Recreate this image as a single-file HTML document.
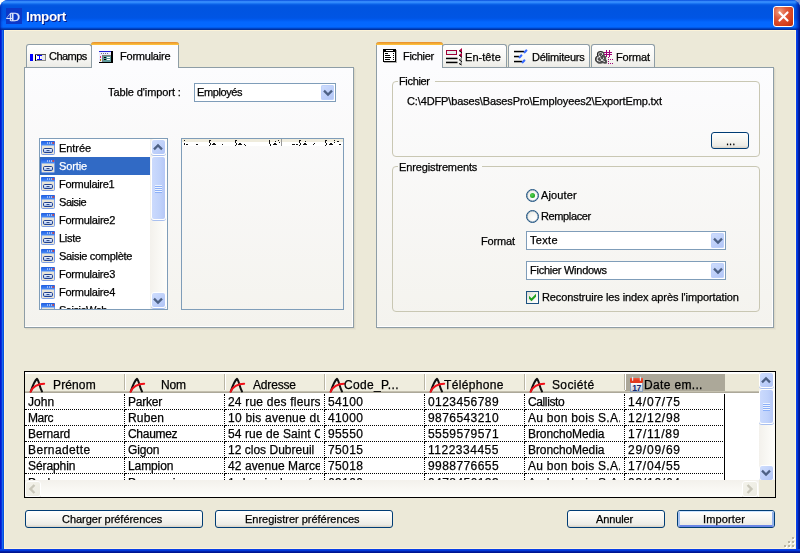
<!DOCTYPE html>
<html lang="fr">
<head>
<meta charset="utf-8">
<title>Import</title>
<style>
html,body{margin:0;padding:0;}
body{width:800px;height:553px;overflow:hidden;background:#fff;position:relative;
  font-family:"Liberation Sans","DejaVu Sans",sans-serif;font-size:11px;color:#000;}
*{box-sizing:border-box;}
.abs{position:absolute;}
.t{position:absolute;white-space:pre;line-height:16px;height:16px;will-change:transform;-webkit-text-stroke:0.25px currentColor;}
#win{position:absolute;left:0;top:0;width:800px;height:553px;background:#0855dd;border-radius:8px 8px 0 0;overflow:hidden;}
#title{position:absolute;left:0;top:0;width:800px;height:30px;
 background:linear-gradient(to bottom,#0042d8 0px,#2a7df5 1px,#3c92ff 2px,#2580f8 3px,#0f68ec 4px,#0458e2 5px,#0054e0 7px,#0055e4 18px,#005cf2 20px,#0467fd 22px,#0468ff 27px,#0050d8 28px,#0038b0 29px,#002a90 30px);}
#title:before{content:"";position:absolute;left:0;top:0;width:4px;height:30px;background:linear-gradient(to right,rgba(0,20,150,.75) 0,rgba(0,30,170,.35) 1px,rgba(0,60,220,0) 3px);}
#title:after{content:"";position:absolute;right:0;top:0;width:5px;height:30px;background:linear-gradient(to left,rgba(0,10,120,.85) 0,rgba(0,20,160,.6) 2px,rgba(0,60,220,0) 5px);}
.cap{text-shadow:1px 1px 0 #0a1883;-webkit-text-stroke:0 !important;}
#client{position:absolute;left:4px;top:30px;width:792px;height:519px;background:#ece9d8;border:1px solid #fcf3d8;}
#bl{position:absolute;left:0;top:30px;width:4px;height:519px;background:linear-gradient(to right,#0019d0 0,#0019d0 1px,#0a30d8 1px,#0a30d8 2px,#1668f0 2px,#1668f0 3px,#0650dd 3px,#0650dd 4px);}
#br{position:absolute;left:796px;top:30px;width:4px;height:523px;background:linear-gradient(to right,#0a40e8 0,#0a40e8 1px,#0238d8 1px,#0238d8 2px,#0020a8 2px,#0020a8 3px,#001590 3px,#001590 4px);}
#bb{position:absolute;left:0;top:549px;width:800px;height:4px;background:linear-gradient(to bottom,#0a40e8 0,#0a40e8 1px,#0238d8 1px,#0238d8 2px,#0020a8 2px,#0020a8 3px,#001590 3px,#001590 4px);}
.close{position:absolute;left:773px;top:6px;width:21px;height:21px;border:1px solid #fff;border-radius:3px;
 background:radial-gradient(circle at 30% 25%,#f0a080 0%,#e0583a 35%,#d6401c 70%,#b92a0c 100%);}
.pane{position:absolute;border:1px solid #8e9da6;background:linear-gradient(to bottom,#fcfcfe 0%,#f4f3ee 100%);box-shadow:inset -1px -1px 0 #fff,1px 1px 0 #dcd9c8,2px 2px 0 #e6e3d2;}
.tab{position:absolute;border:1px solid #8e9da6;border-bottom:none;border-radius:3px 3px 0 0;background:linear-gradient(to bottom,#ffffff 0%,#f7f7f4 60%,#ecebe6 100%);}
.tab.sel{background:#fcfcfe;border-top:none;}
.tab.sel:before{content:"";position:absolute;left:-1px;right:-1px;top:0;height:3px;border-radius:3px 3px 0 0;background:linear-gradient(to bottom,#e68b2c 0,#ffc73c 100%);}
.grp{position:absolute;border:1px solid #c9c7b3;border-radius:4px;}
.grp i{position:absolute;top:-1px;height:1px;background:#fafaf9;}
.combo{position:absolute;border:1px solid #7f9db9;background:#fff;height:19px;}
.combo .dd{position:absolute;right:1px;top:1px;width:13px;height:15px;border-radius:2px;
 background:linear-gradient(135deg,#d0defd 0%,#c1d2fa 45%,#b0c4f6 100%);box-shadow:inset 0 0 0 1px rgba(190,208,250,.9);}
.btn{position:absolute;border:1px solid #003c74;border-radius:3px;height:18px;
 background:linear-gradient(to bottom,#ffffff 0%,#f6f5f0 50%,#ecebe5 85%,#d6d0c5 100%);}
.btn.def:before{content:"";position:absolute;left:0;top:0;right:0;bottom:0;border-radius:2px;border-style:solid;border-width:1px 2px 2px 2px;border-color:#cbe3ff #94b4ec #6a86e6 #a6c2f0;}
.sbv{position:absolute;width:17px;background:linear-gradient(to right,#f3f1ec 0,#fefefb 100%);}
.sbb{position:absolute;width:15px;height:16px;left:1px;border:1px solid #fff;border-radius:3px;background:linear-gradient(135deg,#d0defd 0%,#c1d2fa 45%,#b0c4f6 100%);box-shadow:0 1px 0 #a9c0ef;}
.thumb{position:absolute;left:1px;width:15px;border:1px solid #fff;border-radius:3px;background:linear-gradient(to right,#cbdafd 0,#c1d3fb 55%,#b6c8f7 100%);box-shadow:0 1px 0 #a9c0ef;}
.lbox{position:absolute;border:1px solid #7f9db9;background:#fff;overflow:hidden;}
.lin{position:absolute;overflow:hidden;}
.li{position:absolute;left:0;width:110px;height:18px;}
.li.sel{background:#316ac5;}
.li .fi{left:1px;top:2px;}
.grip{position:absolute;left:3px;width:7px;height:8px;background:repeating-linear-gradient(to bottom,#eef4fe 0,#eef4fe 1px,#8cb0f8 1px,#8cb0f8 2px);}
.hc{position:absolute;top:2px;width:100px;height:17px;background:#efedde;}
.hc:after{content:"";position:absolute;right:-1px;top:0px;width:2px;height:16px;z-index:2;background:linear-gradient(to right,#b9b5a4 0,#b9b5a4 1px,#fff 1px,#fff 2px);}
.hc.hsel{background:#aca899;}
.hc.hsel:after{display:none;}
.cell{position:absolute;width:100px;height:16px;border-right:1px dotted #000;border-bottom:1px dotted #000;}
.cell.last{border-right:1px solid #000;}
.sbd{position:absolute;width:16px;height:16px;border:1px solid #fff;border-radius:3px;background:linear-gradient(135deg,#f3f2ea 0,#ecebe2 100%);box-shadow:0 1px 0 #e4e2d6;}
.radio{position:absolute;width:13px;height:13px;border-radius:50%;border:1px solid #1c5180;box-shadow:inset 0 0 0 0.6px rgba(28,81,128,.55);background:radial-gradient(circle at 65% 65%,#ffffff 0%,#f4f4f0 50%,#dcdcd4 100%);}
.radio i{position:absolute;left:3px;top:3px;width:5px;height:5px;border-radius:50%;background:radial-gradient(circle at 40% 40%,#55d551 0%,#21a121 70%,#1a7e18 100%);}
.chk{position:absolute;width:13px;height:13px;border:1px solid #1c5180;background:linear-gradient(135deg,#dcdcd4 0%,#f4f4f0 50%,#ffffff 100%);}
.gd{position:absolute;width:2px;height:2px;background:#b8b4a2;box-shadow:1px 1px 0 #fff;}
svg{position:absolute;overflow:visible;}
</style>
</head>
<body>
<div class="abs" style="left:790px;top:0;width:10px;height:10px;background:#7b96d8"></div>
<div id="win">

 <svg width="0" height="0" style="left:0;top:0"><defs>
  <linearGradient id="gtb" x1="0" y1="0" x2="0" y2="1"><stop offset="0" stop-color="#1f5ee0"/><stop offset="1" stop-color="#4d8ef8"/></linearGradient>
  <linearGradient id="gbt" x1="0" y1="0" x2="0" y2="1"><stop offset="0" stop-color="#ffffff"/><stop offset="1" stop-color="#8fb0ee"/></linearGradient>
  <g id="ficon">
   <rect x="0.5" y="0.5" width="13" height="13" rx="1" fill="#e9e5d6" stroke="#7b9de4"/>
   <rect x="0" y="0" width="14" height="4.5" rx="1" fill="url(#gtb)"/>
   <rect x="6" y="1.5" width="1" height="1" fill="#fff"/><rect x="8" y="1.5" width="1" height="1" fill="#fff"/><rect x="10" y="1.5" width="1" height="1" fill="#fff"/>
   <rect x="11.5" y="1.2" width="1.6" height="1.6" fill="#f0412a"/>
   <rect x="2.5" y="7.5" width="9" height="4" rx="1.2" fill="url(#gbt)" stroke="#1f3f8f"/>
   <rect x="5.5" y="9" width="3" height="1" fill="#3a4f7f"/>
  </g>
  <g id="aicon" fill="none" stroke-linecap="round">
   <path d="M1.8 13.4 C3.6 8 5.6 2.6 8 0.9 C9.9 2.2 10.4 9 13 13.4" stroke="#111" stroke-width="2"/>
   <path d="M1.5 13.8 C3.2 10 7 5.8 15.2 5.7" stroke="#f01018" stroke-width="1.9"/>
  </g>
  <g id="calicon">
   <linearGradient id="gcal" x1="0" y1="0" x2="0" y2="1"><stop offset="0" stop-color="#ffffff"/><stop offset="1" stop-color="#c3ccd9"/></linearGradient>
   <rect x="0.5" y="4.5" width="12" height="9" fill="url(#gcal)" stroke="#8aa0bd" stroke-width="1"/>
   <rect x="0" y="0" width="13" height="5" rx="1" fill="#e23a1e"/>
   <rect x="0" y="0" width="13" height="1.5" rx="0.8" fill="#f0583c"/>
   <rect x="2" y="-1.2" width="1.2" height="4" fill="#dce6f2"/><rect x="9.8" y="-1.2" width="1.2" height="4" fill="#dce6f2"/>
   <text x="6.6" y="12.6" text-anchor="middle" font-family="Liberation Sans,sans-serif" font-size="8.6" font-weight="bold" fill="#14286e" letter-spacing="-0.5">17</text>
  </g>
  <g id="arrdn"><path d="M0 3.2 L4.8 -1.6 L3.2 -3.3 L0 -0.1 L-3.2 -3.3 L-4.8 -1.6 Z" fill="#4d6185"/></g>
  <g id="arrup"><path d="M0 -3.2 L4.8 1.6 L3.2 3.3 L0 0.1 L-3.2 3.3 L-4.8 1.6 Z" fill="#4d6185"/></g>
 </defs></svg>

 <div id="title">
  <svg style="left:6px;top:8px;will-change:transform" width="16" height="16" viewBox="0 0 16 16"><rect width="16" height="16" fill="#0c38c8"/><text x="0" y="12.6" font-family="Liberation Serif,serif" font-size="12.5" fill="#dde5fb">4</text><text x="4.6" y="12.6" font-family="Liberation Serif,serif" font-size="13" fill="#dde5fb" stroke="#dde5fb" stroke-width="0.3">D</text></svg>
  <div class="close"><svg style="left:0;top:0" width="19" height="19" viewBox="0 0 19 19"><path d="M5.5 5.5 L13.5 13.5 M13.5 5.5 L5.5 13.5" stroke="#fff" stroke-width="2.2" stroke-linecap="round"/></svg></div>
 </div>
<div class="t cap" style="left:25.90px;top:9.32px;letter-spacing:-0.367px;font-size:13.5px;color:#fff;font-weight:bold;">Import</div>
 <div id="bl"></div><div id="br"></div><div id="bb"></div>
 <div id="client"></div>

 <div class="pane" style="left:24px;top:67px;width:330px;height:261px;"></div>
 <div class="tab" style="left:26px;top:44px;width:66px;height:23px;"></div>
 <div class="tab sel" style="left:91px;top:42px;width:88px;height:26px;"></div>
 <div class="combo" style="left:194px;top:83px;width:142px;"><div class="dd"><svg width="14" height="14" viewBox="0 0 14 14" style="left:6.5px;top:7.8px"><use href="#arrdn"/></svg></div></div>

 <div class="pane" style="left:376px;top:67px;width:398px;height:261px;"></div>
 <div class="tab" style="left:442px;top:44px;width:65px;height:23px;"></div>
 <div class="tab" style="left:508px;top:44px;width:82px;height:23px;"></div>
 <div class="tab" style="left:591px;top:44px;width:64px;height:23px;"></div>
 <div class="tab sel" style="left:376px;top:42px;width:67px;height:26px;"></div>
 <div class="grp" style="left:392px;top:81px;width:368px;height:76px;"><i style="left:5px;width:37px"></i></div>
 <div class="btn" style="left:711px;top:132px;width:38px;height:17px;"></div>
 <div class="grp" style="left:392px;top:166px;width:368px;height:146px;"><i style="left:5px;width:84px"></i></div>
 <div class="combo" style="left:526px;top:231px;width:200px;"><div class="dd"><svg width="14" height="14" viewBox="0 0 14 14" style="left:6.5px;top:7.8px"><use href="#arrdn"/></svg></div></div>
 <div class="combo" style="left:526px;top:261px;width:200px;"><div class="dd"><svg width="14" height="14" viewBox="0 0 14 14" style="left:6.5px;top:7.8px"><use href="#arrdn"/></svg></div></div>
 <div class="radio" style="left:526px;top:189px;"><i></i></div>
 <div class="radio" style="left:526px;top:210px;"></div>
 <div class="chk" style="left:526px;top:291px;"><svg width="13" height="13" viewBox="0 0 13 13" style="left:-1px;top:-1px"><path d="M3 4.7 L5.5 7.2 L10 2.7 L10 5.7 L5.5 10.2 L3 7.7 Z" fill="#21a121"/></svg></div>
 <div class="btn" style="left:25px;top:510px;width:178px;"></div>
 <div class="btn" style="left:215px;top:510px;width:178px;"></div>
 <div class="btn" style="left:567px;top:510px;width:98px;"></div>
 <div class="btn def" style="left:677px;top:510px;width:98px;"></div>


 <svg width="17" height="8" viewBox="0 0 17 8" style="left:30px;top:54px" shape-rendering="crispEdges">
  <rect x="0" y="0" width="3" height="7" fill="#0000ff"/>
  <rect x="5" y="0" width="11" height="7" fill="#e9e9e9"/><rect x="6" y="1" width="5" height="5" fill="#fff"/>
  <rect x="5" y="0" width="1" height="7" fill="#000"/><rect x="5" y="0" width="11" height="1" fill="#555"/>
  <rect x="15" y="1" width="1" height="6" fill="#888"/><rect x="6" y="6" width="10" height="1" fill="#888"/>
  <rect x="7" y="1" width="2" height="1" fill="#0000ff"/><rect x="10" y="1" width="2" height="1" fill="#0000ff"/>
  <rect x="7" y="5" width="2" height="1" fill="#0000ff"/><rect x="10" y="5" width="2" height="1" fill="#0000ff"/>
  <rect x="9" y="1" width="1" height="5" fill="#0000ff"/>
 </svg>
 <svg width="14" height="12" viewBox="0 0 14 12" style="left:99px;top:51px" shape-rendering="crispEdges">
  <rect x="0" y="0" width="13" height="11" fill="#ececff"/>
  <rect x="0" y="0" width="12" height="1" fill="#2020d8"/>
  <rect x="2" y="2" width="1" height="1" fill="#777"/><rect x="4" y="2" width="1" height="1" fill="#777"/><rect x="6" y="2" width="1" height="1" fill="#777"/><rect x="8" y="2" width="1" height="1" fill="#777"/>
  <rect x="3" y="4" width="9" height="7" fill="#7e7e7e"/>
  <rect x="4" y="5" width="8" height="6" fill="#5f9c9c"/>
  <rect x="5" y="6" width="2" height="1" fill="#000"/><rect x="8" y="6" width="3" height="1" fill="#fff"/>
  <rect x="5" y="8" width="2" height="1" fill="#000"/><rect x="8" y="8" width="3" height="1" fill="#fff"/>
  <rect x="1" y="5" width="1" height="2" fill="#e0306c"/><rect x="1" y="8" width="1" height="2" fill="#c08000"/>
  <rect x="12" y="0" width="2" height="12" fill="#000"/><rect x="0" y="11" width="14" height="1" fill="#000"/>
 </svg>
 <svg width="14" height="14" viewBox="0 0 14 14" style="left:383px;top:49px" shape-rendering="crispEdges">
  <rect x="1" y="1" width="13" height="13" fill="#b0b0b0"/>
  <rect x="0" y="0" width="13" height="13" fill="#000"/>
  <rect x="1" y="3" width="11" height="9" fill="#fff"/>
  <rect x="3" y="1" width="7" height="1" fill="#fff"/>
  <rect x="2" y="4" width="3" height="1" fill="#000"/><rect x="2" y="6" width="5" height="1" fill="#000"/><rect x="2" y="8" width="6" height="1" fill="#000"/><rect x="2" y="10" width="5" height="1" fill="#000"/>
  <rect x="10" y="4" width="1" height="1" fill="#000"/><rect x="10" y="6" width="1" height="1" fill="#000"/><rect x="10" y="8" width="1" height="1" fill="#000"/><rect x="10" y="10" width="1" height="1" fill="#000"/>
 </svg>
 <svg width="17" height="17" viewBox="0 0 17 17" style="left:446px;top:48px">
  <rect x="0.5" y="2.5" width="10" height="4" fill="#e2f0ec" stroke="#a00038" stroke-width="1"/>
  <rect x="0" y="9.7" width="11.5" height="1.5" fill="#000"/><rect x="0" y="13.7" width="11.5" height="1.5" fill="#000"/>
  <path d="M16 0 L13 2.5 L16 5 Z M16 4.5 L13 7 L16 9.5 Z" fill="#b00040"/>
  <path d="M16 9 L13 11.5 L16 14 Z M16 13 L13 15.5 L16 17 Z" fill="#999"/>
  <path d="M13 2.5 L16 5 M13 7 L16 9.5 M13 11.5 L16 14 M13 15.5 L15.5 17" stroke="#000" stroke-width="1" fill="none"/>
 </svg>
 <svg width="14" height="14" viewBox="0 0 14 14" style="left:514px;top:50px">
  <rect x="0" y="0.8" width="10" height="1.5" fill="#000"/><rect x="0" y="5.8" width="5" height="1.5" fill="#000"/><rect x="0" y="10.8" width="8" height="1.5" fill="#000"/>
  <path d="M10.6 2.2 L12.3 0.5" stroke="#3a6cff" stroke-width="2.3" stroke-linecap="round"/>
  <path d="M5.6 7.2 L7.3 5.5" stroke="#3a6cff" stroke-width="2.3" stroke-linecap="round"/>
  <path d="M8.6 12.2 L10.3 10.5" stroke="#3a6cff" stroke-width="2.3" stroke-linecap="round"/>
 </svg>
 <svg width="19" height="15" viewBox="0 0 19 15" style="left:595px;top:49px;will-change:transform">
  <text x="0.6" y="13" font-family="Liberation Sans,sans-serif" font-size="14.5" font-weight="bold" fill="#222" stroke="#222" stroke-width="2.2" stroke-linejoin="round">&amp;</text>
  <text x="1.3" y="13.6" font-family="Liberation Sans,sans-serif" font-size="14.5" font-weight="bold" fill="#555" stroke="#555" stroke-width="1.6" stroke-linejoin="round">&amp;</text>
  <text x="0.6" y="13" font-family="Liberation Sans,sans-serif" font-size="14.5" font-weight="bold" fill="#fff" stroke="#333" stroke-width="0.7">&amp;</text>
  <g fill="#a00078" shape-rendering="crispEdges">
   <rect x="9" y="3" width="8" height="1"/><rect x="9" y="5" width="8" height="1"/><rect x="11" y="1" width="1.4" height="7"/><rect x="14" y="1" width="1.4" height="7"/>
   <rect x="13" y="8" width="1" height="1"/><rect x="13" y="10" width="1" height="1"/><rect x="13" y="12" width="1" height="1"/><rect x="13" y="14" width="1" height="1"/>
   <rect x="15" y="10" width="1" height="1"/><rect x="17" y="10" width="1" height="1"/><rect x="15" y="14" width="1" height="1"/><rect x="17" y="14" width="1" height="1"/>
  </g>
 </svg>

 <div class="lbox" style="left:39px;top:138px;width:129px;height:172px;">
  <div class="lin" style="left:0;top:0;width:110px;height:170px;">
   <div class="li" style="top:0px"><svg class="fi" width="14" height="14" viewBox="0 0 14 14"><use href="#ficon"/></svg></div>
   <div class="t " style="left:19.40px;top:1.19px;letter-spacing:-0.070px;">Entrée</div>
   <div class="li sel" style="top:18px"><svg class="fi" width="14" height="14" viewBox="0 0 14 14"><use href="#ficon"/></svg></div>
   <div class="t " style="left:19.40px;top:19.19px;letter-spacing:-0.108px;color:#fff;">Sortie</div>
   <div class="li" style="top:36px"><svg class="fi" width="14" height="14" viewBox="0 0 14 14"><use href="#ficon"/></svg></div>
   <div class="t " style="left:19.40px;top:37.19px;letter-spacing:-0.308px;">Formulaire1</div>
   <div class="li" style="top:54px"><svg class="fi" width="14" height="14" viewBox="0 0 14 14"><use href="#ficon"/></svg></div>
   <div class="t " style="left:19.40px;top:55.19px;letter-spacing:-0.461px;">Saisie</div>
   <div class="li" style="top:72px"><svg class="fi" width="14" height="14" viewBox="0 0 14 14"><use href="#ficon"/></svg></div>
   <div class="t " style="left:19.40px;top:73.19px;letter-spacing:-0.235px;">Formulaire2</div>
   <div class="li" style="top:90px"><svg class="fi" width="14" height="14" viewBox="0 0 14 14"><use href="#ficon"/></svg></div>
   <div class="t " style="left:19.40px;top:91.19px;letter-spacing:-0.250px;">Liste</div>
   <div class="li" style="top:108px"><svg class="fi" width="14" height="14" viewBox="0 0 14 14"><use href="#ficon"/></svg></div>
   <div class="t " style="left:19.40px;top:109.19px;letter-spacing:-0.310px;">Saisie complète</div>
   <div class="li" style="top:126px"><svg class="fi" width="14" height="14" viewBox="0 0 14 14"><use href="#ficon"/></svg></div>
   <div class="t " style="left:19.40px;top:127.19px;letter-spacing:-0.244px;">Formulaire3</div>
   <div class="li" style="top:144px"><svg class="fi" width="14" height="14" viewBox="0 0 14 14"><use href="#ficon"/></svg></div>
   <div class="t " style="left:19.40px;top:145.19px;letter-spacing:-0.244px;">Formulaire4</div>
   <div class="li" style="top:162px"><svg class="fi" width="14" height="14" viewBox="0 0 14 14"><use href="#ficon"/></svg></div>
   <div class="t " style="left:19.40px;top:163.19px;letter-spacing:-0.488px;">SaisieWeb</div>
  </div>
  <div class="sbv" style="left:110px;top:0;height:170px;">
   <div class="sbb" style="top:0px;"><svg width="14" height="14" viewBox="0 0 14 14" style="left:6.2px;top:6.9px"><use href="#arrup"/></svg></div>
   <div class="thumb" style="top:17px;height:64px;"><i class="grip" style="top:28px"></i></div>
   <div class="sbb" style="top:153px;"><svg width="14" height="14" viewBox="0 0 14 14" style="left:6.2px;top:7.7px"><use href="#arrdn"/></svg></div>
  </div>
 </div>
 <div class="abs" style="left:181px;top:138px;width:163px;height:172px;border:1px solid #7f9db9;">
  <div class="abs" style="left:0;top:0;width:161px;height:3px;background:#efecdd;"></div>
  <div class="abs" style="left:0;top:3px;width:161px;height:4px;background:#fff;"></div>
  <svg width="161" height="7" viewBox="0 0 161 7" style="left:0;top:0" fill="#111" shape-rendering="crispEdges"><rect x="2" y="1" width="1" height="1"/><rect x="2" y="4" width="1" height="2"/><rect x="4" y="5" width="2" height="1"/><rect x="14" y="5" width="2" height="1"/><rect x="27" y="1" width="2" height="1"/><rect x="27" y="2" width="1" height="2"/><rect x="28" y="4" width="1" height="2"/><rect x="27" y="6" width="1" height="1"/><rect x="30" y="5" width="4" height="1"/><rect x="31" y="4" width="2" height="1"/><rect x="40" y="5" width="1" height="1"/><rect x="53" y="1" width="2" height="1"/><rect x="53" y="2" width="1" height="2"/><rect x="54" y="4" width="1" height="2"/><rect x="53" y="6" width="1" height="1"/><rect x="56" y="5" width="4" height="1"/><rect x="57" y="4" width="2" height="1"/><rect x="62" y="5" width="1" height="1"/><rect x="63" y="6" width="1" height="1"/><rect x="87" y="1" width="1" height="2"/><rect x="87" y="3" width="1" height="2"/><rect x="88" y="5" width="1" height="2"/><rect x="91" y="5" width="4" height="1"/><rect x="92" y="4" width="2" height="1"/><rect x="93" y="2" width="1" height="1"/><rect x="96" y="1" width="1" height="1"/><rect x="97" y="3" width="1" height="1"/><rect x="110" y="5" width="3" height="1"/><rect x="114" y="5" width="2" height="1"/><rect x="117" y="1" width="2" height="1"/><rect x="117" y="2" width="1" height="2"/><rect x="118" y="4" width="1" height="2"/><rect x="117" y="6" width="1" height="1"/><rect x="121" y="5" width="4" height="1"/><rect x="122" y="4" width="2" height="1"/><rect x="123" y="2" width="1" height="1"/><rect x="131" y="5" width="1" height="1"/><rect x="132" y="4" width="1" height="1"/><rect x="143" y="1" width="2" height="1"/><rect x="143" y="2" width="1" height="2"/><rect x="144" y="4" width="1" height="2"/><rect x="143" y="6" width="1" height="1"/><rect x="147" y="5" width="4" height="1"/><rect x="148" y="4" width="2" height="1"/><rect x="152" y="1" width="1" height="1"/><rect x="152" y="3" width="1" height="1"/><rect x="155" y="2" width="2" height="1"/><rect x="157" y="5" width="2" height="1"/><rect x="99" y="0" width="1" height="7" fill="#999"/></svg>
 </div>
 <div class="abs" style="left:24px;top:371px;width:752px;height:127px;border:1px solid #000;background:#fff;overflow:hidden;">
  <div class="abs" style="left:0;top:0;width:734px;height:21px;background:linear-gradient(to bottom,#fff 0,#fff 2px,#ece9d8 2px,#ece9d8 19px,#c4c0af 19px,#c4c0af 20px,#aca899 20px,#aca899 21px);"></div>
  <div class="hc" style="left:0px"><svg width="16" height="15" viewBox="0 0 16 15" style="left:4px;top:4px"><use href="#aicon"/></svg></div>
  <div class="t " style="left:28.00px;top:4.84px;letter-spacing:0.128px;font-size:12px;">Prénom</div>
  <div class="hc" style="left:100px"><svg width="16" height="15" viewBox="0 0 16 15" style="left:4px;top:4px"><use href="#aicon"/></svg></div>
  <div class="t " style="left:136.10px;top:4.84px;letter-spacing:-0.148px;font-size:12px;">Nom</div>
  <div class="hc" style="left:200px"><svg width="16" height="15" viewBox="0 0 16 15" style="left:4px;top:4px"><use href="#aicon"/></svg></div>
  <div class="t " style="left:227.60px;top:4.84px;letter-spacing:-0.176px;font-size:12px;">Adresse</div>
  <div class="hc" style="left:300px"><svg width="16" height="15" viewBox="0 0 16 15" style="left:4px;top:4px"><use href="#aicon"/></svg></div>
  <div class="t " style="left:318.60px;top:4.84px;letter-spacing:0.330px;font-size:12px;">Code_P...</div>
  <div class="hc" style="left:400px"><svg width="16" height="15" viewBox="0 0 16 15" style="left:4px;top:4px"><use href="#aicon"/></svg></div>
  <div class="t " style="left:418.60px;top:4.84px;letter-spacing:0.342px;font-size:12px;">Téléphone</div>
  <div class="hc" style="left:500px"><svg width="16" height="15" viewBox="0 0 16 15" style="left:4px;top:4px"><use href="#aicon"/></svg></div>
  <div class="t " style="left:526.90px;top:4.84px;letter-spacing:0.353px;font-size:12px;">Société</div>
  <div class="hc hsel" style="left:600px"><svg width="14" height="14" viewBox="0 0 14 14" style="left:5px;top:4px"><use href="#calicon"/></svg></div>
  <div class="t " style="left:619.20px;top:4.84px;letter-spacing:0.344px;font-size:12px;">Date em...</div>
  <div class="abs" style="left:0;top:22px;width:701px;height:86px;overflow:hidden;">
   <div class="cell" style="left:0px;top:0px"></div>
   <div class="t " style="left:3.10px;top:-0.16px;letter-spacing:0.092px;font-size:12px;width:92.4px;overflow:hidden;">John</div>
   <div class="cell" style="left:100px;top:0px"></div>
   <div class="t " style="left:103.10px;top:-0.16px;letter-spacing:-0.224px;font-size:12px;width:92.4px;overflow:hidden;">Parker</div>
   <div class="cell" style="left:200px;top:0px"></div>
   <div class="t " style="left:203.10px;top:-0.16px;letter-spacing:0.201px;font-size:12px;width:92.4px;overflow:hidden;">24 rue des fleurs</div>
   <div class="cell" style="left:300px;top:0px"></div>
   <div class="t " style="left:303.10px;top:-0.16px;letter-spacing:0.385px;font-size:12px;width:92.4px;overflow:hidden;">54100</div>
   <div class="cell" style="left:400px;top:0px"></div>
   <div class="t " style="left:403.10px;top:-0.16px;letter-spacing:0.425px;font-size:12px;width:92.4px;overflow:hidden;">0123456789</div>
   <div class="cell" style="left:500px;top:0px"></div>
   <div class="t " style="left:503.10px;top:-0.16px;letter-spacing:-0.382px;font-size:12px;width:92.4px;overflow:hidden;">Callisto</div>
   <div class="cell last" style="left:600px;top:0px"></div>
   <div class="t " style="left:603.10px;top:-0.16px;letter-spacing:0.760px;font-size:12px;width:92.4px;overflow:hidden;">14/07/75</div>
   <div class="cell" style="left:0px;top:16px"></div>
   <div class="t " style="left:3.10px;top:15.84px;letter-spacing:-0.393px;font-size:12px;width:92.4px;overflow:hidden;">Marc</div>
   <div class="cell" style="left:100px;top:16px"></div>
   <div class="t " style="left:103.10px;top:15.84px;letter-spacing:0.145px;font-size:12px;width:92.4px;overflow:hidden;">Ruben</div>
   <div class="cell" style="left:200px;top:16px"></div>
   <div class="t " style="left:203.10px;top:15.84px;letter-spacing:0.243px;font-size:12px;width:92.4px;overflow:hidden;">10 bis avenue du Maine</div>
   <div class="cell" style="left:300px;top:16px"></div>
   <div class="t " style="left:303.10px;top:15.84px;letter-spacing:0.385px;font-size:12px;width:92.4px;overflow:hidden;">41000</div>
   <div class="cell" style="left:400px;top:16px"></div>
   <div class="t " style="left:403.10px;top:15.84px;letter-spacing:0.425px;font-size:12px;width:92.4px;overflow:hidden;">9876543210</div>
   <div class="cell" style="left:500px;top:16px"></div>
   <div class="t " style="left:503.10px;top:15.84px;letter-spacing:0.276px;font-size:12px;width:92.4px;overflow:hidden;">Au bon bois S.A.</div>
   <div class="cell last" style="left:600px;top:16px"></div>
   <div class="t " style="left:603.10px;top:15.84px;letter-spacing:0.760px;font-size:12px;width:92.4px;overflow:hidden;">12/12/98</div>
   <div class="cell" style="left:0px;top:32px"></div>
   <div class="t " style="left:3.10px;top:31.84px;letter-spacing:-0.072px;font-size:12px;width:92.4px;overflow:hidden;">Bernard</div>
   <div class="cell" style="left:100px;top:32px"></div>
   <div class="t " style="left:103.10px;top:31.84px;letter-spacing:-0.294px;font-size:12px;width:92.4px;overflow:hidden;">Chaumez</div>
   <div class="cell" style="left:200px;top:32px"></div>
   <div class="t " style="left:203.10px;top:31.84px;letter-spacing:0.093px;font-size:12px;width:92.4px;overflow:hidden;">54 rue de Saint Cloud</div>
   <div class="cell" style="left:300px;top:32px"></div>
   <div class="t " style="left:303.10px;top:31.84px;letter-spacing:0.385px;font-size:12px;width:92.4px;overflow:hidden;">95550</div>
   <div class="cell" style="left:400px;top:32px"></div>
   <div class="t " style="left:403.10px;top:31.84px;letter-spacing:0.425px;font-size:12px;width:92.4px;overflow:hidden;">5559579571</div>
   <div class="cell" style="left:500px;top:32px"></div>
   <div class="t " style="left:503.10px;top:31.84px;letter-spacing:-0.091px;font-size:12px;width:92.4px;overflow:hidden;">BronchoMedia</div>
   <div class="cell last" style="left:600px;top:32px"></div>
   <div class="t " style="left:603.10px;top:31.84px;letter-spacing:0.800px;font-size:12px;width:92.4px;overflow:hidden;">17/11/89</div>
   <div class="cell" style="left:0px;top:48px"></div>
   <div class="t " style="left:3.10px;top:47.84px;letter-spacing:0.388px;font-size:12px;width:92.4px;overflow:hidden;">Bernadette</div>
   <div class="cell" style="left:100px;top:48px"></div>
   <div class="t " style="left:103.10px;top:47.84px;letter-spacing:-0.146px;font-size:12px;width:92.4px;overflow:hidden;">Gigon</div>
   <div class="cell" style="left:200px;top:48px"></div>
   <div class="t " style="left:203.10px;top:47.84px;letter-spacing:0.016px;font-size:12px;width:92.4px;overflow:hidden;">12 clos Dubreuil</div>
   <div class="cell" style="left:300px;top:48px"></div>
   <div class="t " style="left:303.10px;top:47.84px;letter-spacing:0.385px;font-size:12px;width:92.4px;overflow:hidden;">75015</div>
   <div class="cell" style="left:400px;top:48px"></div>
   <div class="t " style="left:403.10px;top:47.84px;letter-spacing:0.514px;font-size:12px;width:92.4px;overflow:hidden;">1122334455</div>
   <div class="cell" style="left:500px;top:48px"></div>
   <div class="t " style="left:503.10px;top:47.84px;letter-spacing:-0.091px;font-size:12px;width:92.4px;overflow:hidden;">BronchoMedia</div>
   <div class="cell last" style="left:600px;top:48px"></div>
   <div class="t " style="left:603.10px;top:47.84px;letter-spacing:0.760px;font-size:12px;width:92.4px;overflow:hidden;">29/09/69</div>
   <div class="cell" style="left:0px;top:64px"></div>
   <div class="t " style="left:3.10px;top:63.84px;letter-spacing:-0.081px;font-size:12px;width:92.4px;overflow:hidden;">Séraphin</div>
   <div class="cell" style="left:100px;top:64px"></div>
   <div class="t " style="left:103.10px;top:63.84px;letter-spacing:-0.104px;font-size:12px;width:92.4px;overflow:hidden;">Lampion</div>
   <div class="cell" style="left:200px;top:64px"></div>
   <div class="t " style="left:203.10px;top:63.84px;letter-spacing:0.071px;font-size:12px;width:92.4px;overflow:hidden;">42 avenue Marceau</div>
   <div class="cell" style="left:300px;top:64px"></div>
   <div class="t " style="left:303.10px;top:63.84px;letter-spacing:0.385px;font-size:12px;width:92.4px;overflow:hidden;">75018</div>
   <div class="cell" style="left:400px;top:64px"></div>
   <div class="t " style="left:403.10px;top:63.84px;letter-spacing:0.425px;font-size:12px;width:92.4px;overflow:hidden;">9988776655</div>
   <div class="cell" style="left:500px;top:64px"></div>
   <div class="t " style="left:503.10px;top:63.84px;letter-spacing:0.276px;font-size:12px;width:92.4px;overflow:hidden;">Au bon bois S.A.</div>
   <div class="cell last" style="left:600px;top:64px"></div>
   <div class="t " style="left:603.10px;top:63.84px;letter-spacing:0.760px;font-size:12px;width:92.4px;overflow:hidden;">17/04/55</div>
   <div class="cell" style="left:0px;top:80px"></div>
   <div class="t " style="left:3.10px;top:80.84px;letter-spacing:-0.600px;font-size:12px;width:92.4px;overflow:hidden;">Paul</div>
   <div class="cell" style="left:100px;top:80px"></div>
   <div class="t " style="left:103.10px;top:80.84px;letter-spacing:-0.011px;font-size:12px;width:92.4px;overflow:hidden;">Pomponi</div>
   <div class="cell" style="left:200px;top:80px"></div>
   <div class="t " style="left:203.10px;top:80.84px;letter-spacing:-0.457px;font-size:12px;width:92.4px;overflow:hidden;">1 chemin des prés</div>
   <div class="cell" style="left:300px;top:80px"></div>
   <div class="t " style="left:303.10px;top:80.84px;letter-spacing:0.385px;font-size:12px;width:92.4px;overflow:hidden;">69100</div>
   <div class="cell" style="left:400px;top:80px"></div>
   <div class="t " style="left:403.10px;top:80.84px;letter-spacing:0.425px;font-size:12px;width:92.4px;overflow:hidden;">0478456123</div>
   <div class="cell" style="left:500px;top:80px"></div>
   <div class="t " style="left:503.10px;top:80.84px;letter-spacing:0.276px;font-size:12px;width:92.4px;overflow:hidden;">Au bon bois S.A.</div>
   <div class="cell last" style="left:600px;top:80px"></div>
   <div class="t " style="left:603.10px;top:80.84px;letter-spacing:0.760px;font-size:12px;width:92.4px;overflow:hidden;">03/10/64</div>
  </div>
  <div class="sbv" style="left:734px;top:0px;width:16px;height:108px;">
   <div class="sbb" style="left:0px;top:0px;"><svg width="14" height="14" viewBox="0 0 14 14" style="left:6.2px;top:6.9px"><use href="#arrup"/></svg></div>
   <div class="thumb" style="left:0px;top:17px;height:35px;"><i class="grip" style="top:13px;left:3px;width:7px"></i></div>
   <div class="sbb" style="left:0px;top:93px;"><svg width="14" height="14" viewBox="0 0 14 14" style="left:6.2px;top:7.2px"><use href="#arrdn"/></svg></div>
  </div>
  <div class="abs" style="left:0;top:108px;width:734px;height:17px;background:linear-gradient(to bottom,#f3f1ec 0,#fefefb 100%);">
   <div class="sbd" style="left:0px;top:1px;"><svg width="1" height="1" viewBox="0 0 1 1" style="left:6.4px;top:6.6px"><path d="M-3.2 0 L1.6 -4.8 L3.3 -3.2 L0.1 0 L3.3 3.2 L1.6 4.8 Z" fill="#c9c7ba"/></svg></div>
   <div class="sbd" style="left:717px;top:1px;"><svg width="1" height="1" viewBox="0 0 1 1" style="left:7.2px;top:6.6px"><path d="M3.2 0 L-1.6 -4.8 L-3.3 -3.2 L-0.1 0 L-3.3 3.2 L-1.6 4.8 Z" fill="#c9c7ba"/></svg></div>
  </div>
  <div class="abs" style="left:734px;top:108px;width:16px;height:17px;background:#ece9d8;"></div>
 </div>
 <div class="t " style="left:48.60px;top:48.19px;letter-spacing:-0.528px;">Champs</div>
 <div class="t " style="left:120.10px;top:48.19px;letter-spacing:-0.228px;">Formulaire</div>
 <div class="t " style="left:107.60px;top:84.19px;letter-spacing:-0.091px;">Table d'import :</div>
 <div class="t " style="left:197.20px;top:84.19px;letter-spacing:-0.387px;">Employés</div>
 <div class="t " style="left:403.10px;top:48.19px;letter-spacing:-0.317px;">Fichier</div>
 <div class="t " style="left:464.90px;top:49.19px;letter-spacing:0.047px;">En-tête</div>
 <div class="t " style="left:531.80px;top:49.19px;letter-spacing:-0.220px;">Délimiteurs</div>
 <div class="t " style="left:615.60px;top:49.19px;letter-spacing:-0.174px;">Format</div>
 <div class="t " style="left:399.20px;top:73.19px;letter-spacing:-0.345px;">Fichier</div>
 <div class="t " style="left:406.60px;top:92.69px;letter-spacing:-0.133px;">C:\4DFP\bases\BasesPro\Employees2\ExportEmp.txt</div>
 <div class="t " style="left:726.20px;top:133.49px;letter-spacing:0.009px;">...</div>
 <div class="t " style="left:398.80px;top:158.69px;letter-spacing:-0.126px;">Enregistrements</div>
 <div class="t " style="left:541.40px;top:187.19px;letter-spacing:0.134px;">Ajouter</div>
 <div class="t " style="left:541.40px;top:208.19px;letter-spacing:-0.376px;">Remplacer</div>
 <div class="t " style="left:481.20px;top:232.69px;letter-spacing:-0.174px;">Format</div>
 <div class="t " style="left:529.60px;top:232.19px;letter-spacing:0.301px;">Texte</div>
 <div class="t " style="left:529.60px;top:262.19px;letter-spacing:-0.259px;">Fichier Windows</div>
 <div class="t " style="left:541.60px;top:289.19px;letter-spacing:-0.110px;">Reconstruire les index après l'importation</div>
 <div class="t " style="left:62.10px;top:511.19px;letter-spacing:-0.031px;">Charger préférences</div>
 <div class="t " style="left:245.10px;top:511.19px;letter-spacing:-0.015px;">Enregistrer préférences</div>
 <div class="t " style="left:596.20px;top:511.19px;letter-spacing:-0.117px;">Annuler</div>
 <div class="t " style="left:703.20px;top:511.19px;letter-spacing:0.129px;">Importer</div>
 <i class="gd" style="left:792px;top:537px"></i>
 <i class="gd" style="left:788px;top:541px"></i>
 <i class="gd" style="left:792px;top:541px"></i>
 <i class="gd" style="left:784px;top:545px"></i>
 <i class="gd" style="left:788px;top:545px"></i>
 <i class="gd" style="left:792px;top:545px"></i>
</div>
</body>
</html>
